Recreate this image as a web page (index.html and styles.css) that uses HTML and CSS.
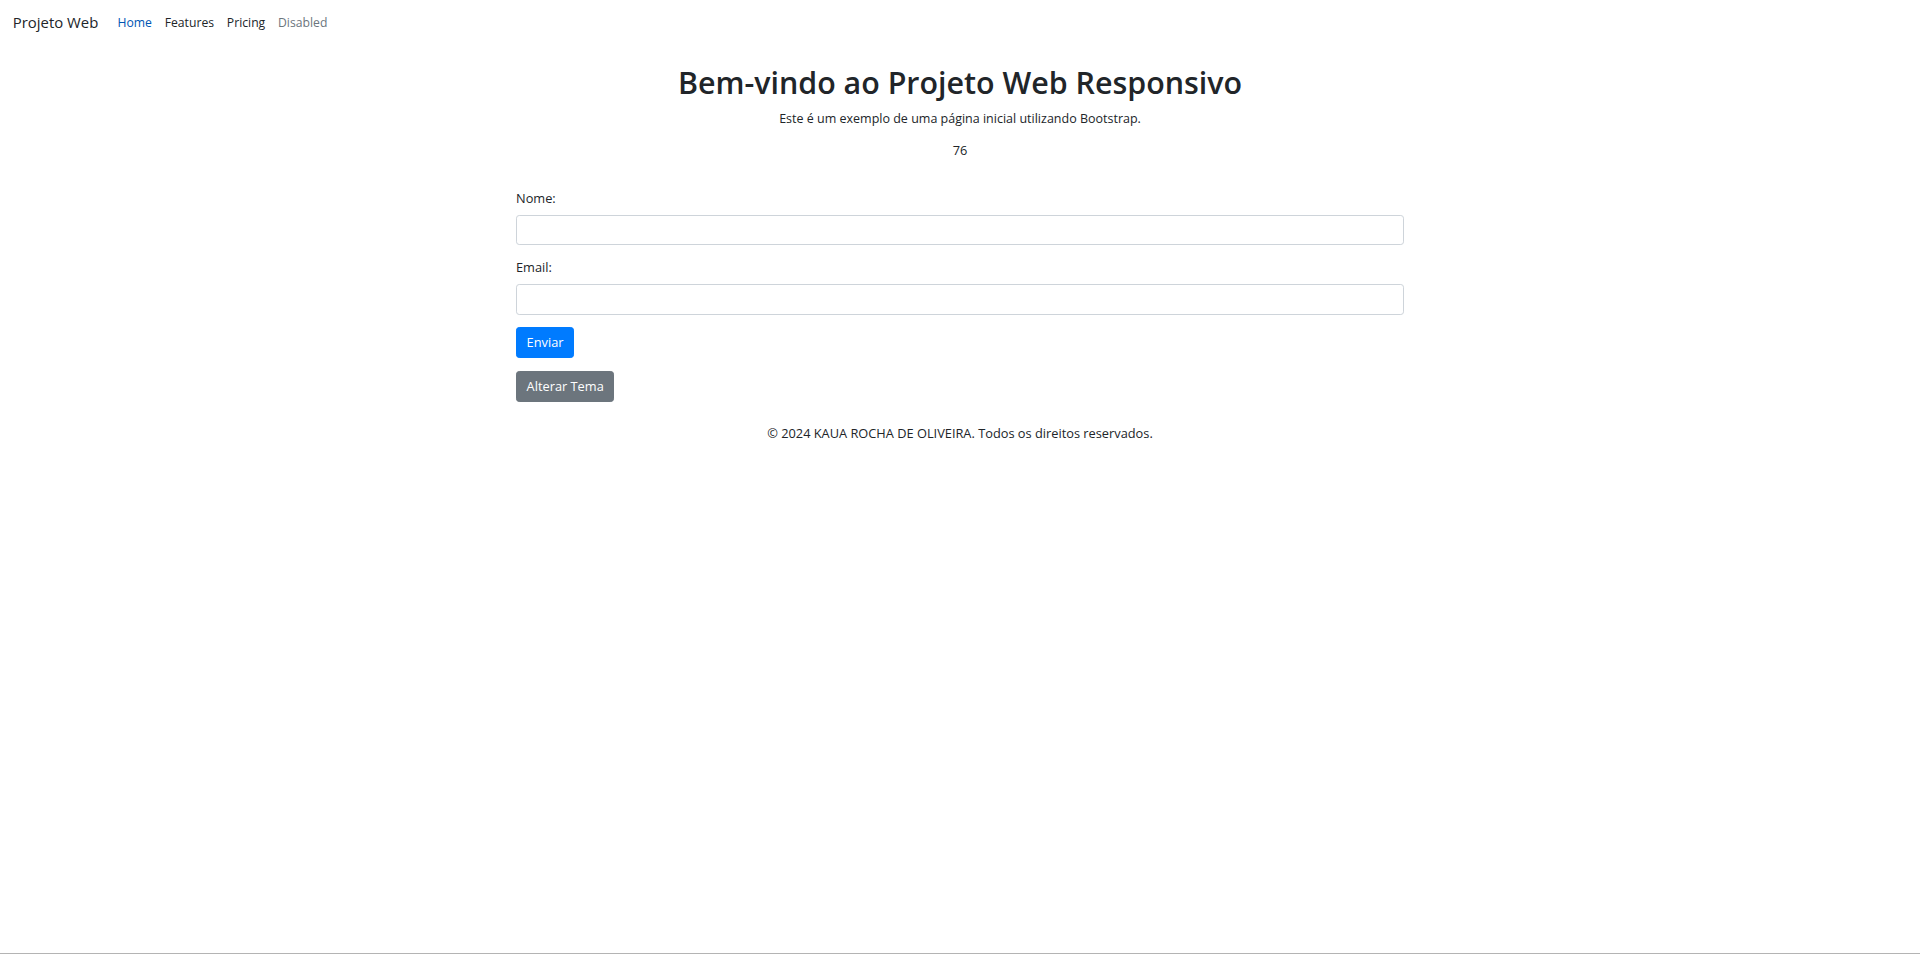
FILE: index.html
```html
<!DOCTYPE html>
<html lang="pt-BR">
<head>
<meta charset="utf-8">
<title>Projeto Web Responsivo</title>
<link rel="stylesheet" href="styles.css">
</head>
<body>
<nav class="navbar">
  <a class="brand" href="#">Projeto Web</a>
  <ul class="nav">
    <li><a class="nav-link active" href="#">Home</a></li>
    <li><a class="nav-link" href="#">Features</a></li>
    <li><a class="nav-link" href="#">Pricing</a></li>
    <li><span class="nav-link disabled">Disabled</span></li>
  </ul>
</nav>
<main class="container">
  <h1 class="title">Bem-vindo ao Projeto Web Responsivo</h1>
  <p class="lead">Este é um exemplo de uma página inicial utilizando Bootstrap.</p>
  <p class="count">76</p>
  <form class="form">
    <div class="form-group">
      <label class="label" for="nome">Nome:</label>
      <input class="input" type="text" id="nome">
    </div>
    <div class="form-group">
      <label class="label" for="email">Email:</label>
      <input class="input" type="email" id="email">
    </div>
    <button class="btn btn-primary" type="submit">Enviar</button>
  </form>
  <button class="btn btn-secondary theme-btn" type="button">Alterar Tema</button>
  <footer class="footer">© 2024 KAUA ROCHA DE OLIVEIRA. Todos os direitos reservados.</footer>
</main>
</body>
</html>
```

FILE: styles.css
```css
html {
  height: 100%;
}
body {
  margin: 0;
  min-height: 100%;
  box-sizing: border-box;
  border-bottom: 1px solid #b4b4b4;
  font-family: "Open Sans", "Noto Sans", sans-serif;
  font-size: 12.8px;
  line-height: 1.5;
  color: #212529;
  background: #fff;
}
a {
  text-decoration: none;
}
.navbar {
  display: flex;
  align-items: center;
  padding: 6.4px 12.8px;
}
.brand {
  font-size: 14.9px;
  line-height: 24px;
  padding: 4px 0;
  margin-right: 12.8px;
  color: #212529;
}
.nav {
  display: flex;
  list-style: none;
  margin: 0;
  padding: 0;
}
.nav-link {
  display: block;
  padding: 6.4px;
  font-size: 12.2px;
  line-height: 19.2px;
  color: #212529;
}
.nav-link.active {
  color: #0056b3;
}
.nav-link.disabled {
  color: #6c757d;
}
.container {
  width: 888px;
  margin: 0 auto;
  padding-top: 19.2px;
}
.title {
  margin: 0 0 6.4px;
  font-size: 30.4px;
  font-weight: 600;
  line-height: 38.4px;
  text-align: center;
}
.lead, .count {
  margin: 0 0 12.8px;
  text-align: center;
}
.lead {
  font-size: 12.5px;
  line-height: 19.2px;
}
.form {
  margin-top: 29px;
}
.form-group {
  margin-bottom: 12.8px;
}
.label {
  display: block;
  margin-bottom: 6.4px;
}
.input {
  display: block;
  width: 100%;
  box-sizing: border-box;
  height: 30.8px;
  padding: 4.8px 9.6px;
  font: inherit;
  color: #495057;
  background: #fff;
  border: 1px solid #ced4da;
  border-radius: 3.2px;
}
.btn {
  display: inline-block;
  padding: 4.8px 9.6px;
  font: inherit;
  line-height: 1.5;
  color: #fff;
  border: 1px solid transparent;
  border-radius: 3.2px;
}
.btn-primary {
  background: #007bff;
  border-color: #007bff;
}
.btn-secondary {
  background: #6c757d;
  border-color: #6c757d;
}
.theme-btn {
  margin-top: 12.8px;
}
.footer {
  margin-top: 22px;
  text-align: center;
}
```
